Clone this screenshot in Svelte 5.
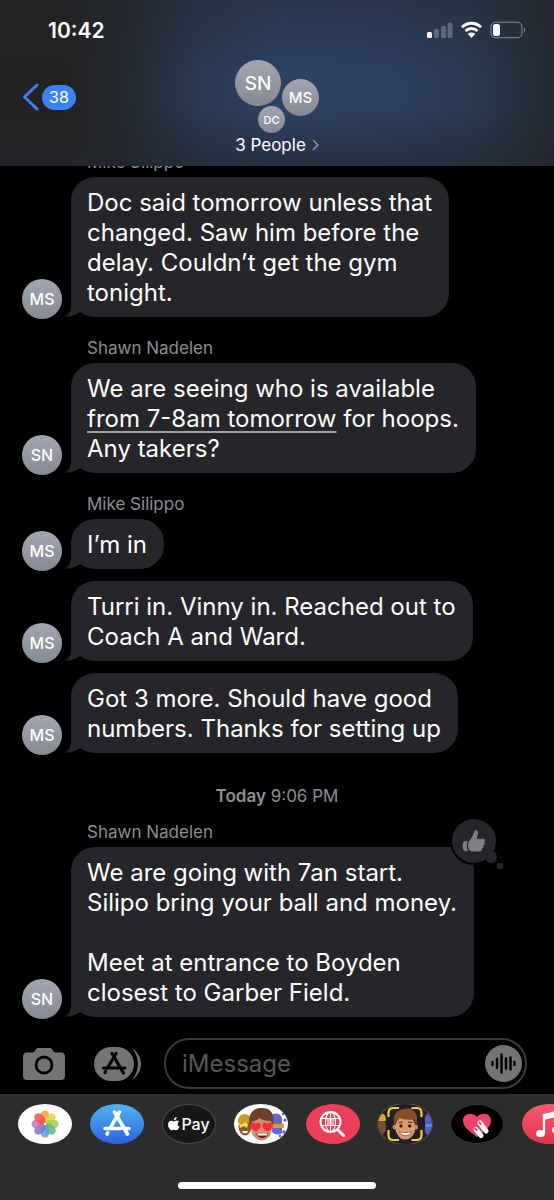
<script>
    let messages = [
        {
            sender: "Mike Silippo",
            initials: "MS",
            lines: [
                "Doc said tomorrow unless that",
                "changed. Saw him before the",
                "delay. Couldn’t get the gym",
                "tonight.",
            ],
        },
        {
            sender: "Shawn Nadelen",
            initials: "SN",
            lines: [
                "We are seeing who is available",
                { event: "from 7-8am tomorrow", rest: " for hoops." },
                "Any takers?",
            ],
        },
        { sender: "Mike Silippo", initials: "MS", lines: ["I’m in"] },
        {
            initials: "MS",
            lines: ["Turri in. Vinny in. Reached out to", "Coach A and Ward."],
        },
        {
            initials: "MS",
            lines: ["Got 3 more. Should have good", "numbers. Thanks for setting up"],
        },
        {
            day: "Today",
            time: "9:06 PM",
            sender: "Shawn Nadelen",
            initials: "SN",
            liked: true,
            lines: [
                "We are going with 7an start.",
                "Silipo bring your ball and money.",
                "",
                "Meet at entrance to Boyden",
                "closest to Garber Field.",
            ],
        },
    ];

    let petals = [
        { angle: 0, color: "#f8a13a" },
        { angle: 45, color: "#e6d23a" },
        { angle: 90, color: "#a4cf4e" },
        { angle: 135, color: "#5bb984" },
        { angle: 180, color: "#5d9fdc" },
        { angle: 225, color: "#7a78c8" },
        { angle: 270, color: "#c178b0" },
        { angle: 315, color: "#f0584c" },
    ];

    let draft = "";
</script>

<div class="screen">
    <header>
        <div class="status">
            <time>10:42</time>
            <svg viewBox="0 0 100 18" width="100" height="18">
                <g fill="#fff">
                    <rect x="0" y="11" width="5" height="6" rx="1.5" />
                    <g opacity=".25">
                        <rect x="7" y="8" width="5" height="9" rx="1.5" />
                        <rect x="14" y="5" width="5" height="12" rx="1.5" />
                        <rect x="20.5" y="1.5" width="5" height="15.5" rx="1.5" />
                    </g>
                </g>
                <g fill="none" stroke="#fff" stroke-width="2.9">
                    <path d="M35 6.2C40.5 .9 48.5 .9 54 6.2" />
                    <path d="M38.5 10C42 6.7 47 6.7 50.5 10" />
                </g>
                <path d="M40.7 12.8C43 10.9 46 10.9 48.3 12.8L44.5 17Z" fill="#fff" />
                <rect x="64" y="1.2" width="31" height="15.5" rx="4.5" fill="none" stroke="#8590a0" />
                <path d="M97 6.5C98.7 7.3 98.7 10.5 97 11.3Z" fill="#8590a0" />
                <rect x="66" y="3" width="7" height="12" rx="2.5" fill="#fff" />
            </svg>
        </div>
        <div class="nav">
            <button class="back" aria-label="Back, 38 unread">
                <svg viewBox="0 0 18 28" width="18" height="28">
                    <path d="M15 2L2.5 14L15 26" />
                </svg>
                <span class="unread">38</span>
            </button>
            <button class="group">
                <span class="faces">
                    <span class="avatar big">SN</span>
                    <span class="avatar medium">MS</span>
                    <span class="avatar small">DC</span>
                </span>
                <span class="people">
                    3 People
                    <svg viewBox="0 0 7 12" width="7" height="12">
                        <path d="M1 1L6 6L1 11" />
                    </svg>
                </span>
            </button>
        </div>
    </header>

    <main>
        {#each messages as message}
            {#if message.day}
                <div class="date"><b>{message.day}</b> {message.time}</div>
            {/if}
            {#if message.sender}
                <div class="sender">{message.sender}</div>
            {/if}
            <div class="row">
                <span class="avatar">{message.initials}</span>
                <div class="bubble">
                    {#each message.lines as line}
                        <div class="line">
                            {#if line.event}<a href="#event">{line.event}</a>{line.rest}{:else}{line}{/if}
                        </div>
                    {/each}
                    <svg class="tail" viewBox="0 0 22 24" width="22" height="24">
                        <path d="M7 0V12C7 18 5 22 0 23.5C7 24 12 22 16 19L22 14V0Z" />
                    </svg>
                    {#if message.liked}
                        <svg class="tapback" viewBox="0 0 54 54" width="54" height="54">
                            <circle cx="24" cy="24" r="24" fill="#000" />
                            <circle cx="24" cy="24" r="22" />
                            <circle cx="41" cy="40" r="6" />
                            <circle cx="50" cy="49" r="3.3" />
                            <g fill="#7f7f81">
                                <path d="M19 24C21 22 23 19 24 15C24.5 12.5 28 12.7 28 15.5C28 18 27 20 26.7 21.7H33C35.5 21.7 35.5 24.5 34 25C35.3 26 34.7 28 33.5 28.3C34 30 33.3 31 32.2 31.3C32.3 33.3 31 34.5 29 34.5H23C20.5 34.5 18.5 33 18.2 30.5C18 28 18 26 19 24Z" />
                                <path d="M13.5 25C15 23.7 17 23.8 17.5 24.3C16.3 27.5 16.5 31 18 34C15.5 34.7 13.5 34 13 32C12.5 29.5 12.5 27 13.5 25Z" />
                            </g>
                        </svg>
                    {/if}
                </div>
            </div>
        {/each}
    </main>

    <form class="compose" on:submit|preventDefault>
        <button type="button" aria-label="Camera">
            <svg viewBox="0 0 42 34" width="42" height="34">
                <path fill="#747476" d="M4 5.5H9.5C11 5.5 11.5 4.5 12.5 3C13.5 1.5 14 1 16 1H26C28 1 28.5 1.5 29.5 3C30.5 4.5 31 5.5 32.5 5.5H38C40.5 5.5 42 7 42 9.5V29C42 31.5 40.5 33 38 33H4C1.5 33 0 31.5 0 29V9.5C0 7 1.5 5.5 4 5.5Z" />
                <circle cx="21" cy="18" r="8" fill="none" stroke="#000" stroke-width="2.8" />
            </svg>
        </button>
        <button type="button" aria-label="Apps">
            <svg viewBox="0 0 48 34" width="48" height="34">
                <path fill="#747476" d="M17 0H23A17 17 0 0 1 23 34H17A17 17 0 0 1 17 0Z" />
                <path fill="#747476" d="M37.5 1C50 8 50 26 37.5 33C46 25 46 9 37.5 1Z" />
                <g transform="translate(20 17)" fill="none" stroke="#000" stroke-width="3.2" stroke-linecap="round">
                    <path d="M-2 -10.5L9.5 9M2 -10.5L-6.5 4M-10.5 4H4M8.5 4H11M-8.5 7.5L-9 8.5" />
                </g>
            </svg>
        </button>
        <div class="field">
            <input type="text" aria-label="Message" placeholder="iMessage" bind:value={draft} />
            <button type="button" aria-label="Record audio">
                <svg viewBox="0 0 37 37" width="37" height="37">
                    <circle cx="18.5" cy="18.5" r="18.5" fill="#747476" />
                    <path d="M7.5 17V20M12 14V23M16.5 9.5V27.5M21 13.5V23.5M25.5 12.5V24.5M29.5 17V20" stroke="#000" stroke-width="2.5" stroke-linecap="round" />
                </svg>
            </button>
        </div>
    </form>

    <footer>
        <nav>
            <button class="app white" aria-label="Photos">
                <svg viewBox="0 0 54 40">
                    <g transform="translate(27 20)">
                        {#each petals as petal}
                            <rect x="-4.2" y="-13.5" width="8.4" height="12.5" rx="4.2" fill={petal.color} opacity=".85" transform="rotate({petal.angle})" />
                        {/each}
                    </g>
                </svg>
            </button>
            <button class="app store" aria-label="App Store">
                <svg viewBox="0 0 54 40">
                    <g transform="translate(27 19)" fill="none" stroke="#fff" stroke-width="3.6" stroke-linecap="round">
                        <path d="M-2.5 -11L10.5 11M2.5 -11L-7 5.5M-12 5.5H4M9 5.5H12M-9.3 9.8L-10 11" />
                    </g>
                </svg>
            </button>
            <button class="app pay" aria-label="Apple Pay">
                <svg viewBox="0 0 12 14" width="12" height="14">
                    <path d="M8.7 0C8.8 1.7 7.5 3.2 5.9 3.2C5.8 1.6 7.2 .2 8.7 0ZM11 4.7C9 6 9.3 8.7 11.5 9.6C10.9 11.3 9.7 13.3 8.4 13.3C7.4 13.3 7.1 12.7 6 12.7C4.9 12.7 4.5 13.3 3.6 13.3C1.9 13.3 0 10 0 7.5C0 5 1.6 3.7 3.2 3.7C4.3 3.7 5.2 4.4 5.9 4.4C6.6 4.4 7.5 3.6 8.8 3.6C9.7 3.6 10.5 4 11 4.7Z" />
                </svg>
                <span>Pay</span>
            </button>
            <button class="app white" aria-label="Memoji stickers">
                <svg viewBox="0 0 54 40">
                    <path d="M37 12C40 8 47 9 48 15V29C45 32 40 30 38 28Z" fill="#6a62d8" />
                    <path d="M38 20H50V24H38Z" fill="#d99a3c" />
                    <g fill="#5a5ae0">
                        <circle cx="49" cy="10" r="1.3" />
                        <circle cx="51" cy="16" r="1.5" />
                        <circle cx="50" cy="28" r="1.7" />
                        <circle cx="46" cy="32" r="1.2" />
                    </g>
                    <ellipse cx="11" cy="22" rx="6.5" ry="9.5" fill="#8a5a2e" />
                    <path d="M4 19C3 7 18 7 18 19Z" fill="#c99a2c" />
                    <path d="M5 19L8 20L11 18L14 20L13 24L10 22L6 24Z" fill="#ffdf3a" />
                    <path d="M8 27H14C13 30 9 30 8 27Z" fill="#fff" />
                    <ellipse cx="27.5" cy="24" rx="10.5" ry="12.5" fill="#cf8f6e" />
                    <path d="M16 23C13 10 19 4 27 4C37 3 42 11 38.5 23C38 20 37.5 18 36.5 17C32 17 28 16 25.5 14C23 16 21 17 18.5 17.5C17 19 16.5 21 16 23Z" fill="#6f4029" />
                    <path d="M22 27.5C17 25 15.5 22.5 16.5 20C17.5 18 20.5 18 21.7 20C23 18 26.5 18.5 26.7 21C26.8 24 24 26 22 27.5ZM34 27.5C30 26 28.3 24 28.5 21C28.5 18 32 17.5 33.2 20C35 17.5 38.5 18 39 21C39.3 24 36 26 34 27.5Z" fill="#f2303c" />
                    <path d="M22 29.5H34C33 35.5 24 35.5 22 29.5Z" fill="#5f1d1d" />
                    <path d="M23 29.5H33V31.5H24Z" fill="#fff" />
                </svg>
            </button>
            <button class="app images" aria-label="#images">
                <svg viewBox="0 0 54 40" fill="none" stroke="#fff">
                    <circle cx="24.5" cy="18" r="10" stroke-width="2" />
                    <path d="M32 26L37.5 31.5" stroke-width="3" stroke-linecap="round" />
                    <path d="M15 14.5H34M15 21.5H34M24.5 8V28" stroke-width="1.2" />
                    <ellipse cx="24.5" cy="18" rx="5" ry="10" stroke-width="1.2" />
                    <path d="M21 15H28V21H21Z" fill="#fff" fill-opacity=".5" stroke="none" />
                </svg>
            </button>
            <button class="app memoji" aria-label="Memoji">
                <svg viewBox="0 0 54 40">
                    <path d="M0 14C5 14 8 17 8 23C8 28 5 32 0 32Z" fill="#7a4b2c" />
                    <path d="M0 17C2 7 8 8 8 17Z" fill="#d9a52e" />
                    <path d="M54 8C49 8 46 12 47 18V28C48 31 51 32 54 31Z" fill="#5e58c4" />
                    <path d="M48 20H54V23H48Z" fill="#3fa0d0" />
                    <circle cx="17" cy="23" r="2.5" fill="#c98862" />
                    <circle cx="37.5" cy="23" r="2.5" fill="#c98862" />
                    <ellipse cx="27.3" cy="23.5" rx="10" ry="12" fill="#d99a70" />
                    <path d="M16.5 21C13.5 10 20 5 27 5C31 3.5 34 4.500 35 6.5C39 9 40 15 38 21C37.5 18.5 37 17 36 15.500C30 16 25 15.500 22 14C20 15.5 17.500 17 16.5 21Z" fill="#84502c" />
                    <path d="M20.5 18.7L25 18.2M30 18.2L34.5 18.7" stroke="#6b3f22" stroke-width="1.3" />
                    <circle cx="23" cy="21.9" r="1.6" fill="#2c1a12" />
                    <circle cx="31.7" cy="21.9" r="1.6" fill="#2c1a12" />
                    <path d="M21.5 27.5C25 29 30 29 33.5 27.5C32.5 33 23 33 21.5 27.5Z" fill="#fff" stroke="#8b3c2c" stroke-width=".7" />
                    <path d="M10.5 13V9Q10.5 4 15.5 4H21M33.5 4H38.5Q43.5 4 43.5 9V13M43.5 26V31Q43.5 36 38.5 36H33.5M21 36H15.5Q10.5 36 10.5 31V26" fill="none" stroke="#f5cf32" stroke-width="2.2" />
                </svg>
            </button>
            <button class="app touch" aria-label="Digital Touch">
                <svg viewBox="0 0 54 40">
                    <path d="M27 33C19 27 13 23 13 16.5C13 9 22.5 7.5 27 13C31.5 7.5 41 9 41 16.5C41 23 35 27 27 33Z" fill="#f0426c" />
                    <path d="M26 25.5L31 31.5M30 19L36 27" stroke="#fff" stroke-width="5" stroke-linecap="round" />
                    <path d="M25.3 24.7L26.5 26M29.5 18.5L30.7 20" stroke="#f0426c" stroke-width="2" stroke-linecap="round" />
                </svg>
            </button>
            <button class="app music" aria-label="Music">
                <svg viewBox="0 0 54 40">
                    <path d="M22 29V11L38 7.5V25.5" fill="none" stroke="#fff" stroke-width="2.4" />
                    <path d="M21 10.5L39 6.5V12L21 16Z" fill="#fff" />
                    <ellipse cx="18.5" cy="29.5" rx="4.5" ry="3.6" fill="#fff" />
                    <ellipse cx="34.5" cy="26" rx="4.5" ry="3.6" fill="#fff" />
                </svg>
            </button>
        </nav>
        <div class="home"></div>
    </footer>
</div>

<style>
    :global(body) {
        margin: 0;
        background: #000;
    }
    .screen {
        display: flex;
        flex-direction: column;
        min-height: 100vh;
        overflow: hidden;
        background: #000;
        color: #fff;
        font-family: Inter, "Liberation Sans", sans-serif;
    }
    button {
        display: flex;
        padding: 0;
        border: 0;
        background: none;
        color: inherit;
        font-family: inherit;
        cursor: pointer;
    }
    svg {
        display: block;
        flex: none;
    }

    /* Status bar and conversation title */
    header {
        position: relative;
        z-index: 1;
        box-sizing: border-box;
        height: 166px;
        background:
            linear-gradient(rgba(34, 38, 44, 0.4), rgba(34, 38, 44, 0) 45%, rgba(34, 38, 44, 0) 65%, rgba(34, 38, 44, 0.6)),
            linear-gradient(90deg, #222 0%, #222 12%, #24282e 22%, #2a3a52 36%, #2d4261 50%, #2c4060 70%, #293a50 86%, #232930 100%);
    }
    .status {
        display: flex;
        align-items: center;
        justify-content: space-between;
        height: 60px;
        padding: 0 27px 0 48px;
    }
    time {
        font-size: 21px;
        font-weight: 600;
    }
    .nav {
        display: grid;
        grid-template-columns: 1fr auto 1fr;
        padding: 0 22px;
    }
    .back {
        align-items: center;
        align-self: start;
        gap: 2px;
        margin-top: 23px;
    }
    .back path {
        fill: none;
        stroke: #3b82f6;
        stroke-width: 3;
        stroke-linecap: round;
        stroke-linejoin: round;
    }
    .unread {
        padding: 0 7px;
        border-radius: 13px;
        background: #3b82f6;
        font-size: 16px;
        line-height: 25px;
    }
    .group {
        flex-direction: column;
        align-items: center;
        gap: 2px;
    }
    .faces {
        position: relative;
        width: 84px;
        height: 73px;
    }
    .people {
        display: flex;
        align-items: center;
        gap: 6px;
        font-size: 17px;
        line-height: 20px;
    }
    .people path {
        fill: none;
        stroke: #8c95a3;
        stroke-width: 1.5;
    }

    .avatar {
        display: flex;
        flex: none;
        align-items: center;
        justify-content: center;
        width: 40px;
        height: 40px;
        border-radius: 50%;
        background: linear-gradient(#a3a6b1, #868892);
        font-size: 16px;
        font-weight: 500;
    }
    .faces .avatar {
        position: absolute;
    }
    .big {
        top: 0;
        left: 0;
        width: 46px;
        height: 46px;
        font-size: 19px;
    }
    .medium {
        top: 19px;
        right: 0;
        width: 37px;
        height: 37px;
        font-size: 15px;
    }
    .small {
        bottom: 0;
        left: 23px;
        width: 27px;
        height: 27px;
        font-size: 11px;
    }

    /* Messages */
    main {
        flex: 1;
        margin-top: -17px;
        padding: 0 22px;
    }
    .sender {
        padding: 4px 0 6px 65px;
        color: #8d8d92;
        font-size: 17px;
        line-height: 18px;
    }
    .row {
        display: flex;
        align-items: flex-end;
        gap: 9px;
        margin-bottom: 12px;
    }
    .row + .sender {
        margin-top: 18px;
    }
    .row .avatar {
        margin-bottom: -2px;
    }
    .bubble {
        position: relative;
        padding: 11px 17px 9px 16px;
        border-radius: 24px;
        background: #26252a;
        font-size: 24px;
        line-height: 30px;
    }
    .line {
        min-height: 30px;
    }
    .line a {
        color: inherit;
        text-decoration-color: #a0a0a3;
        text-decoration-thickness: 2px;
        text-underline-offset: 4px;
    }
    .tail {
        position: absolute;
        bottom: 0;
        left: -7px;
        z-index: 0;
        fill: #26252a;
    }
    .tapback {
        position: absolute;
        top: -30px;
        right: -30px;
        fill: #26252a;
    }
    .date {
        padding: 21px 0 13px;
        color: #8d8d92;
        font-size: 17px;
        line-height: 20px;
        text-align: center;
    }
    .date b {
        font-weight: 600;
    }

    /* Message entry */
    .compose {
        display: flex;
        align-items: center;
        margin-bottom: 5px;
        padding: 0 27px 0 23px;
    }
    .compose > button {
        margin-right: 29px;
    }
    .compose > button + button {
        margin-right: 22px;
    }
    .field {
        display: flex;
        flex: 1;
        align-items: center;
        min-width: 0;
        padding: 5px 3px 5px 5px;
        border: 2px solid #3a3a3c;
        border-radius: 25px;
    }
    .field input {
        flex: 1;
        min-width: 0;
        padding: 0 11px;
        border: 0;
        outline: 0;
        background: none;
        color: #fff;
        font-family: inherit;
        font-size: 24px;
        line-height: 30px;
    }
    .field input::placeholder {
        color: #565658;
        opacity: 1;
    }

    /* App drawer */
    footer {
        display: flex;
        flex-direction: column;
        gap: 38px;
        padding: 10px 0 11px 18px;
        background: #2c2c2c;
    }
    nav {
        display: flex;
        gap: 18px;
        overflow: hidden;
    }
    .app {
        flex: none;
        align-items: center;
        justify-content: center;
        box-sizing: border-box;
        width: 54px;
        height: 40px;
        overflow: hidden;
        border-radius: 27px / 20px;
    }
    .app > svg:only-child {
        width: 54px;
        height: 40px;
    }
    .white {
        background: #fff;
    }
    .store {
        background: linear-gradient(#4fb5f0, #2e62de);
    }
    .pay {
        gap: 1px;
        border: 1px solid #4c4c4c;
        background: #161616;
        fill: #fff;
        font-size: 16px;
        font-weight: 500;
    }
    .images {
        background: #ec4058;
    }
    .memoji {
        background: #202022;
        box-shadow: 0 0 0 1px #505054;
    }
    .touch {
        background: #000;
        box-shadow: inset 0 0 0 1px #3c3c3c;
    }
    .music {
        background: linear-gradient(#f45c70, #e8324c);
    }
    .home {
        align-self: center;
        width: 37%;
        height: 7px;
        margin-right: 18px;
        border-radius: 4px;
        background: #fff;
    }
</style>
